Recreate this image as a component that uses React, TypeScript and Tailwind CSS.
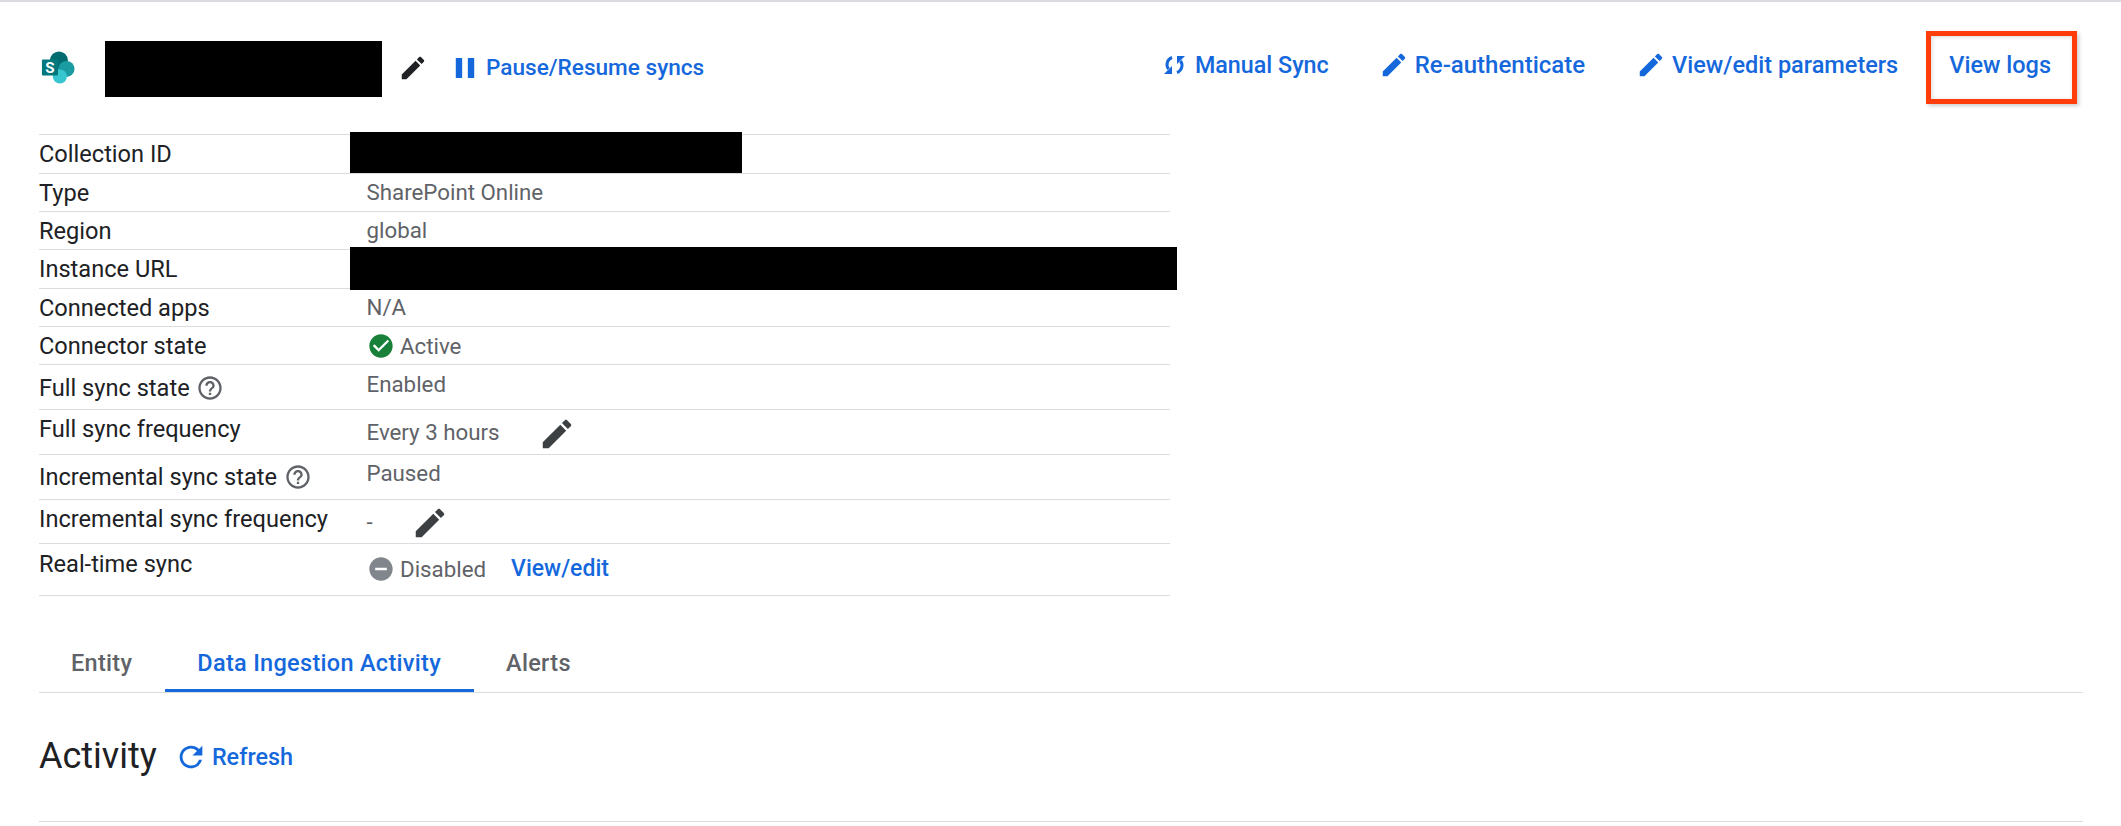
import React from "react";

const EDIT = "M3 17.25V21h3.75L17.81 9.94l-3.75-3.75L3 17.25zM20.71 7.04c.39-.39.39-1.02 0-1.41l-2.34-2.34c-.39-.39-1.02-.39-1.41 0l-1.83 1.83 3.75 3.75 1.83-1.83z";

function Icon({ d, className }: { d: string; className: string }) {
  return (
    <svg viewBox="0 0 24 24" fill="currentColor" className={className}>
      <path d={d} />
    </svg>
  );
}

function Help({ className }: { className: string }) {
  return (
    <Icon
      className={className}
      d="M11 18h2v-2h-2v2zm1-16C6.48 2 2 6.48 2 12s4.48 10 10 10 10-4.48 10-10S17.52 2 12 2zm0 18c-4.41 0-8-3.59-8-8s3.59-8 8-8 8 3.59 8 8-3.59 8-8 8zm0-14c-2.21 0-4 1.79-4 4h2c0-1.1.9-2 2-2s2 .9 2 2c0 2-3 1.75-3 5h2c0-2.25 3-2.5 3-5 0-2.21-1.79-4-4-4z"
    />
  );
}

function Logo() {
  return (
    <svg viewBox="0 0 36 36" className="w-[34px] h-[34px] shrink-0 mr-[2px]">
      <circle cx="19" cy="10" r="9.500" fill="#036c70" />
      <circle cx="27" cy="19" r="8.500" fill="#1a9ba1" />
      <circle cx="20" cy="27" r="7.500" fill="#37c6d0" />
      <rect x="1" y="9" width="17" height="17" rx="1" fill="#03787c" />
      <text x="9.500" y="23" textAnchor="middle" fontSize="16" fontWeight="700" fill="#fff" fontFamily="Roboto, sans-serif">
        S
      </text>
    </svg>
  );
}

function SyncIcon() {
  return (
    <svg viewBox="0 0 21 20" className="w-[21px] h-[20px] shrink-0" fill="none" stroke="currentColor" strokeWidth="3">
      <path d="M8 2.500A7.500 7.500 0 0 0 4.500 14" />
      <path d="M13 17.500A7.500 7.500 0 0 0 16.500 6" />
      <path d="M8 11v8H0z" fill="currentColor" stroke="none" />
      <path d="M13 9V1h8z" fill="currentColor" stroke="none" />
    </svg>
  );
}

function Row({ h, label, children, labelClass = "pt-[6px]", valueClass = "pt-[7px]" }: { h: string; label: React.ReactNode; children?: React.ReactNode; labelClass?: string; valueClass?: string }) {
  return (
    <div className={`flex border-t border-[#dadce0] ${h}`}>
      <div className={`w-[327.5px] shrink-0 flex items-start text-[#202124] text-[23.6px] ${labelClass}`}>{label}</div>
      <div className={`flex items-start text-[#5f6368] text-[22.3px] ${valueClass}`}>{children}</div>
    </div>
  );
}

export default function App() {
  return (
    <div className="relative w-[2121px] h-[826px] overflow-hidden bg-white border-t-2 border-[#dadce0] font-['Roboto',sans-serif] text-[22px] leading-[26px]">
      <header className="flex items-center h-[132px] pl-[41px] pr-[70px] text-[#1568dc] font-medium">
        <Logo />
        <div className="w-[277px] h-[56px] bg-black ml-[28px] mt-[2px] shrink-0" />
        <Icon d={EDIT} className="w-[30px] h-[30px] ml-[16px] text-[#202124] shrink-0" />
        <Icon d="M5.500 19H10V5H5.500v14zM14 5v14h4.500V5H14z" className="w-[34px] h-[34px] ml-[20px] shrink-0" />
        <span className="ml-[4px] text-[22.600px] mb-[1px]">Pause/Resume syncs</span>
        <div className="flex-1" />
        <div className="flex items-center mb-[6px] text-[23.500px]">
          <SyncIcon />
          <span className="ml-[10px] text-[23.300px]">Manual Sync</span>
          <Icon d={EDIT} className="w-[30px] h-[30px] ml-[50px] shrink-0" />
          <span className="ml-[6px] text-[24px]">Re-authenticate</span>
          <Icon d={EDIT} className="w-[30px] h-[30px] ml-[51px] shrink-0" />
          <span className="ml-[6px]">View/edit parameters</span>
          <span className="ml-[51px]">View logs</span>
        </div>
      </header>

      <section className="relative ml-[39px] w-[1131px] border-b border-[#dadce0]">
        <Row h="h-[39px]" label="Collection ID" />
        <Row h="h-[38px]" label="Type" valueClass="pt-[5px]">SharePoint Online</Row>
        <Row h="h-[38px]" label="Region" valueClass="pt-[5px]">global</Row>
        <Row h="h-[39px]" label="Instance URL" />
        <Row h="h-[38px]" label="Connected apps" labelClass="pt-[6px]" valueClass="pt-[5px]">N/A</Row>
        <Row h="h-[38px]" label="Connector state" labelClass="pt-[6px]" valueClass="pt-[5px]">
          <span className="flex items-center">
            <Icon d="M12 2C6.48 2 2 6.480 2 12s4.480 10 10 10 10-4.480 10-10S17.520 2 12 2zm-2 15-5-5 1.410-1.410L10 14.170l7.590-7.590L19 8l-9 9z" className="w-[28px] h-[28px] mr-[5.500px] text-[#188038]" />
            Active
          </span>
        </Row>
        <Row
          h="h-[45px]"
          labelClass="pt-[9px]"
          valueClass="pt-[6px]"
          label={
            <span className="flex items-center">
              Full sync state
              <Help className="w-[28px] h-[28px] ml-[6px] text-[#5f6368]" />
            </span>
          }
        >
          Enabled
        </Row>
        <Row h="h-[45px]" label="Full sync frequency" labelClass="pt-[6px]" valueClass="pt-[9px]">
          <span>Every 3 hours</span>
          <Icon d={EDIT} className="w-[38px] h-[38px] ml-[38px] mt-[-4px] text-[#3c4043]" />
        </Row>
        <Row
          h="h-[45px]"
          labelClass="pt-[8px]"
          valueClass="pt-[5px]"
          label={
            <span className="flex items-center">
              Incremental sync state
              <Help className="w-[28px] h-[28px] ml-[7px] text-[#5f6368]" />
            </span>
          }
        >
          Paused
        </Row>
        <Row h="h-[44px]" label="Incremental sync frequency" labelClass="pt-[6px]" valueClass="pt-[9px]">
          <span>-</span>
          <Icon d={EDIT} className="w-[38px] h-[38px] ml-[38px] mt-[-5px] text-[#3c4043]" />
        </Row>
        <Row h="h-[52px]" label="Real-time sync" labelClass="pt-[7px]" valueClass="pt-[11px]">
          <span className="flex items-center">
            <Icon d="M12 2C6.480 2 2 6.480 2 12s4.480 10 10 10 10-4.480 10-10S17.520 2 12 2zm5 11H7v-2h10v2z" className="w-[28px] h-[28px] mr-[5.500px] text-[#80868b]" />
            Disabled
          </span>
          <span className="ml-[25px] mt-[1px] text-[#1568dc] font-medium text-[23px]">View/edit</span>
        </Row>

        <div className="absolute left-[310.500px] top-[-2px] w-[392px] h-[41px] bg-black" />
        <div className="absolute left-[311px] top-[113px] w-[827px] h-[43px] bg-black" />
      </section>

      <nav className="flex mx-[39px] w-[2044px] h-[97px] items-end border-b border-[#dadce0] text-[23.500px] font-medium tracking-[0.3px]">
        <div className="h-[64px] pl-[32px] pr-[33px] pt-[22px] text-[#5f6368]">Entity</div>
        <div className="h-[64px] pl-[32px] pr-[33px] pt-[22px] text-[#1568dc] border-b-[3px] border-[#1568dc]">Data Ingestion Activity</div>
        <div className="h-[64px] pl-[32px] pr-[33px] pt-[22px] text-[#5f6368]">Alerts</div>
      </nav>

      <div className="flex items-center mx-[39px] w-[2044px] h-[129px] border-b border-[#dadce0]">
        <h2 className="text-[36px] leading-[42px] font-normal text-[#202124] mb-[3px]">Activity</h2>
        <Icon d="M17.650 6.350A7.958 7.958 0 0 0 12 4c-4.420 0-7.990 3.580-7.990 8s3.570 8 7.990 8c3.730 0 6.840-2.550 7.730-6h-2.080A5.990 5.990 0 0 1 12 18c-3.310 0-6-2.690-6-6s2.690-6 6-6c1.660 0 3.140.69 4.220 1.780L13 11h7V4l-2.350 2.350z" className="w-[34px] h-[34px] ml-[17px] text-[#1568dc]" />
        <span className="ml-[4px] text-[#1568dc] font-medium text-[23.400px]">Refresh</span>
      </div>

      <div className="absolute left-[1926px] top-[29px] w-[151px] h-[73px] border-[5px] border-[#ff3d0a] shadow-[inset_1px_1px_4px_rgba(0,0,0,0.15),2px_2px_4px_rgba(0,0,0,0.2)]" />
    </div>
  );
}
